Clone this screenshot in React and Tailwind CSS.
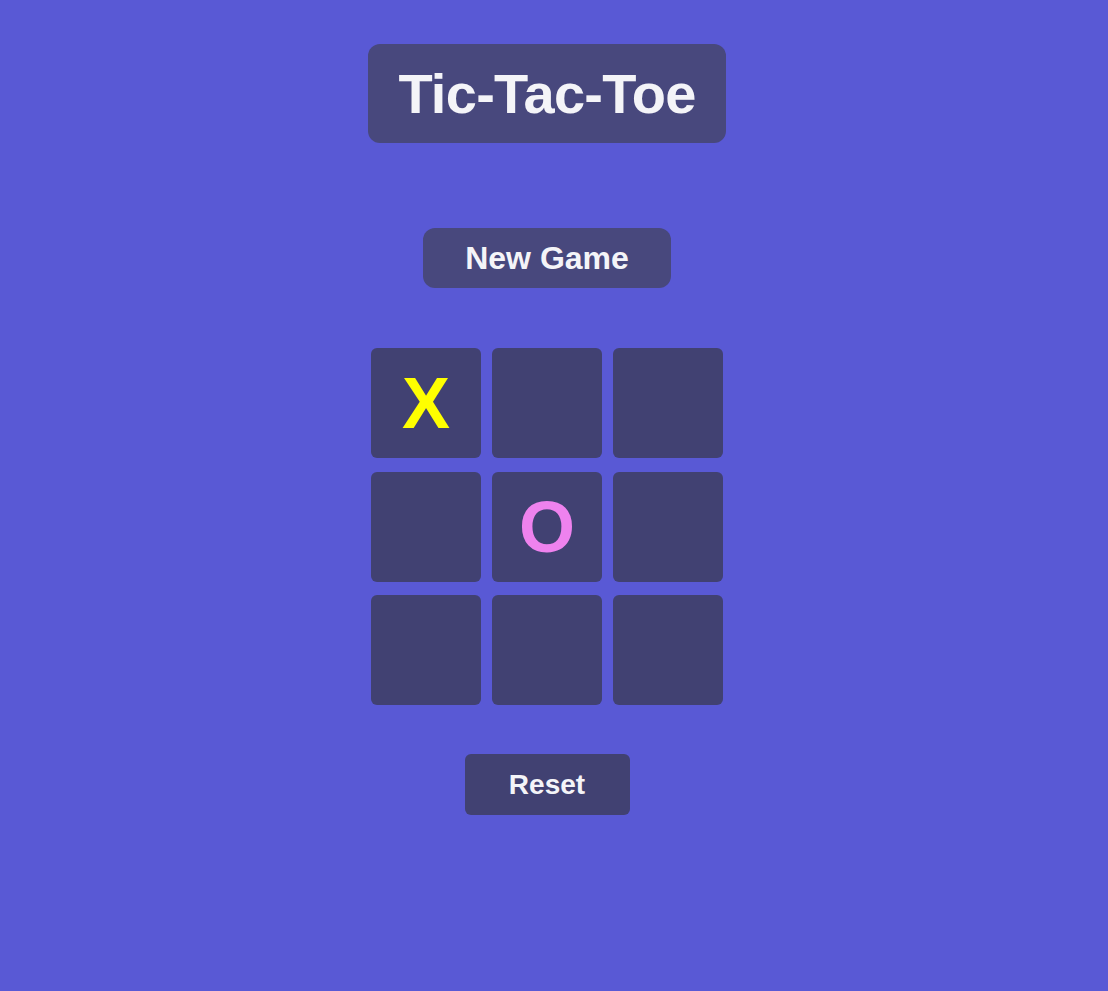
import React from "react";

const cells = ["X", "", "", "", "O", "", "", "", ""];

export default function App() {
  return (
    <div
      className="min-h-[991px] w-full bg-[#5959d5]"
      style={{ fontFamily: '"Liberation Sans", Arial, sans-serif' }}
    >
      <div className="flex w-[1094px] flex-col items-center pt-[44px]">
        <h1 className="flex h-[99px] items-center rounded-xl bg-[#48487d] px-[30px] text-[56px] font-bold leading-none tracking-[-0.7px] text-[#f4f4f8]">
          Tic-Tac-Toe
        </h1>
        <button className="mt-[85px] flex h-[60px] w-[248px] items-center justify-center rounded-xl bg-[#48487d] text-[32px] font-bold leading-none text-[#f4f4f8]">
          New Game
        </button>
        <div className="mt-[60px] grid grid-cols-[110px_110px_110px] gap-x-[11px] gap-y-[13.5px]">
          {cells.map((c, i) => (
            <div
              key={i}
              className={
                "flex h-[110px] w-[110px] items-center justify-center rounded-md bg-[#414172] text-[72px] font-bold leading-none " +
                (c === "X" ? "text-[#ffff00]" : "text-[#ee82ee]")
              }
            >
              {c}
            </div>
          ))}
        </div>
        <button className="mt-[49px] flex h-[61px] w-[165px] items-center justify-center rounded-md bg-[#414172] text-[28px] font-bold leading-none text-[#f4f4f8]">
          Reset
        </button>
      </div>
    </div>
  );
}
